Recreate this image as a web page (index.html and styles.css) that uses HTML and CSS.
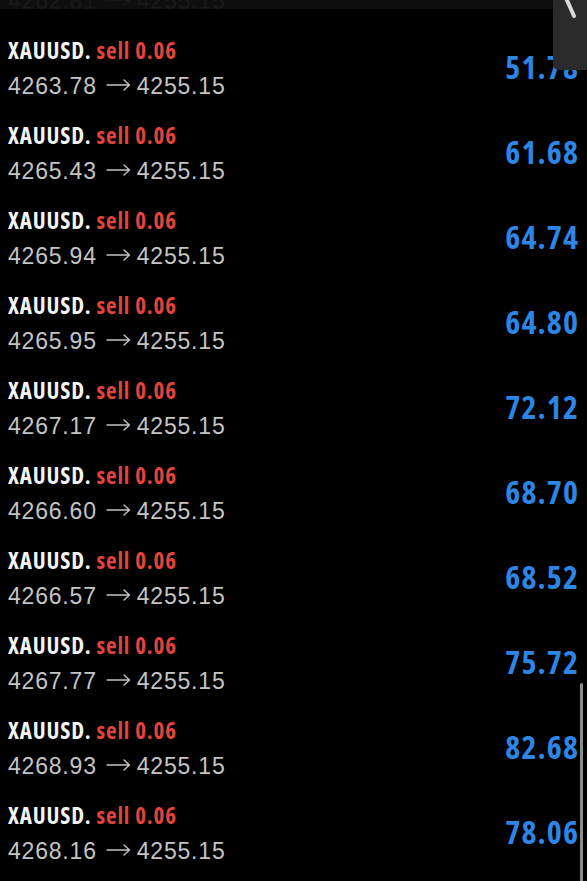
FILE: index.html
```html
<!DOCTYPE html>
<html>
<head>
<meta charset="utf-8">
<link rel="stylesheet" href="styles.css">
</head>
<body>
<div class="screen">
  <div class="partial">
    <div class="row">
      <div class="info">
        <div class="title"><span class="sym">XAUUSD.</span> <span class="side">sell 0.06</span></div>
        <div class="price">4262.81<svg class="arrow" width="25" height="12" viewBox="0 0 25 12"><path d="M1 6 H23.5 M18 1 L23.5 6 L18 11" stroke="currentColor" stroke-width="1.4" fill="none" stroke-linecap="round" stroke-linejoin="round"/></svg>4255.15</div>
      </div>
      <div class="pnl">45.96</div>
    </div>
  </div>
  <div class="topbar"></div>

  <div class="row">
    <div class="info">
      <div class="title"><span class="sym">XAUUSD.</span> <span class="side">sell 0.06</span></div>
      <div class="price">4263.78<svg class="arrow" width="25" height="12" viewBox="0 0 25 12"><path d="M1 6 H23.5 M18 1 L23.5 6 L18 11" stroke="currentColor" stroke-width="1.4" fill="none" stroke-linecap="round" stroke-linejoin="round"/></svg>4255.15</div>
    </div>
    <div class="pnl">51.78</div>
  </div>
  <div class="row">
    <div class="info">
      <div class="title"><span class="sym">XAUUSD.</span> <span class="side">sell 0.06</span></div>
      <div class="price">4265.43<svg class="arrow" width="25" height="12" viewBox="0 0 25 12"><path d="M1 6 H23.5 M18 1 L23.5 6 L18 11" stroke="currentColor" stroke-width="1.4" fill="none" stroke-linecap="round" stroke-linejoin="round"/></svg>4255.15</div>
    </div>
    <div class="pnl">61.68</div>
  </div>
  <div class="row">
    <div class="info">
      <div class="title"><span class="sym">XAUUSD.</span> <span class="side">sell 0.06</span></div>
      <div class="price">4265.94<svg class="arrow" width="25" height="12" viewBox="0 0 25 12"><path d="M1 6 H23.5 M18 1 L23.5 6 L18 11" stroke="currentColor" stroke-width="1.4" fill="none" stroke-linecap="round" stroke-linejoin="round"/></svg>4255.15</div>
    </div>
    <div class="pnl">64.74</div>
  </div>
  <div class="row">
    <div class="info">
      <div class="title"><span class="sym">XAUUSD.</span> <span class="side">sell 0.06</span></div>
      <div class="price">4265.95<svg class="arrow" width="25" height="12" viewBox="0 0 25 12"><path d="M1 6 H23.5 M18 1 L23.5 6 L18 11" stroke="currentColor" stroke-width="1.4" fill="none" stroke-linecap="round" stroke-linejoin="round"/></svg>4255.15</div>
    </div>
    <div class="pnl">64.80</div>
  </div>
  <div class="row">
    <div class="info">
      <div class="title"><span class="sym">XAUUSD.</span> <span class="side">sell 0.06</span></div>
      <div class="price">4267.17<svg class="arrow" width="25" height="12" viewBox="0 0 25 12"><path d="M1 6 H23.5 M18 1 L23.5 6 L18 11" stroke="currentColor" stroke-width="1.4" fill="none" stroke-linecap="round" stroke-linejoin="round"/></svg>4255.15</div>
    </div>
    <div class="pnl">72.12</div>
  </div>
  <div class="row">
    <div class="info">
      <div class="title"><span class="sym">XAUUSD.</span> <span class="side">sell 0.06</span></div>
      <div class="price">4266.60<svg class="arrow" width="25" height="12" viewBox="0 0 25 12"><path d="M1 6 H23.5 M18 1 L23.5 6 L18 11" stroke="currentColor" stroke-width="1.4" fill="none" stroke-linecap="round" stroke-linejoin="round"/></svg>4255.15</div>
    </div>
    <div class="pnl">68.70</div>
  </div>
  <div class="row">
    <div class="info">
      <div class="title"><span class="sym">XAUUSD.</span> <span class="side">sell 0.06</span></div>
      <div class="price">4266.57<svg class="arrow" width="25" height="12" viewBox="0 0 25 12"><path d="M1 6 H23.5 M18 1 L23.5 6 L18 11" stroke="currentColor" stroke-width="1.4" fill="none" stroke-linecap="round" stroke-linejoin="round"/></svg>4255.15</div>
    </div>
    <div class="pnl">68.52</div>
  </div>
  <div class="row">
    <div class="info">
      <div class="title"><span class="sym">XAUUSD.</span> <span class="side">sell 0.06</span></div>
      <div class="price">4267.77<svg class="arrow" width="25" height="12" viewBox="0 0 25 12"><path d="M1 6 H23.5 M18 1 L23.5 6 L18 11" stroke="currentColor" stroke-width="1.4" fill="none" stroke-linecap="round" stroke-linejoin="round"/></svg>4255.15</div>
    </div>
    <div class="pnl">75.72</div>
  </div>
  <div class="row">
    <div class="info">
      <div class="title"><span class="sym">XAUUSD.</span> <span class="side">sell 0.06</span></div>
      <div class="price">4268.93<svg class="arrow" width="25" height="12" viewBox="0 0 25 12"><path d="M1 6 H23.5 M18 1 L23.5 6 L18 11" stroke="currentColor" stroke-width="1.4" fill="none" stroke-linecap="round" stroke-linejoin="round"/></svg>4255.15</div>
    </div>
    <div class="pnl">82.68</div>
  </div>
  <div class="row">
    <div class="info">
      <div class="title"><span class="sym">XAUUSD.</span> <span class="side">sell 0.06</span></div>
      <div class="price">4268.16<svg class="arrow" width="25" height="12" viewBox="0 0 25 12"><path d="M1 6 H23.5 M18 1 L23.5 6 L18 11" stroke="currentColor" stroke-width="1.4" fill="none" stroke-linecap="round" stroke-linejoin="round"/></svg>4255.15</div>
    </div>
    <div class="pnl">78.06</div>
  </div>

  <div class="corner">
    <svg width="34" height="70" viewBox="0 0 34 70"><path d="M13 -2 L21 16" stroke="#d9d9d9" stroke-width="4" stroke-linecap="round" fill="none"/></svg>
  </div>
  <div class="scrollbar"></div>
</div>
</body>
</html>
```
FILE: styles.css
```css
html, body {
  margin: 0;
  padding: 0;
  background: #000;
}
.screen {
  position: relative;
  width: 587px;
  height: 881px;
  overflow: hidden;
  background: #000;
}
.partial {
  height: 24px;
  overflow: hidden;
  display: flex;
  flex-direction: column;
  justify-content: flex-end;
  opacity: 0.18;
}
.partial .row {
  flex-shrink: 0;
}
.topbar {
  position: absolute;
  left: 0;
  top: 0;
  width: 100%;
  height: 9px;
  background: rgba(22, 22, 22, 0.7);
}
.row {
  height: 85px;
  box-sizing: border-box;
  display: flex;
  align-items: center;
  justify-content: space-between;
  padding: 3px 9px 0 8px;
}
.info {
  display: flex;
  flex-direction: column;
}
.title {
  font-family: "Open Sans", "Liberation Sans", sans-serif;
  font-stretch: 75%;
  font-weight: 700;
  font-size: 23px;
  letter-spacing: 0.85px;
  line-height: 36px;
  white-space: nowrap;
}
.sym {
  color: #f4f4f4;
}
.side {
  color: #e2443d;
}
.price {
  font-family: "Liberation Sans", Arial, sans-serif;
  font-size: 23px;
  letter-spacing: 0.8px;
  line-height: 36px;
  color: #c4c4c4;
  white-space: nowrap;
  display: flex;
  align-items: center;
}
.arrow {
  margin: -2px 6px 0 9px;
  flex-shrink: 0;
}
.pnl {
  font-family: "Open Sans", "Liberation Sans", sans-serif;
  font-stretch: 75%;
  font-weight: 700;
  font-size: 32px;
  letter-spacing: 1.1px;
  margin-right: -1px;
  color: #2d85e5;
  margin-top: -4px;
}
.corner {
  position: absolute;
  right: 0;
  top: 0;
  width: 34px;
  height: 70px;
  background: #2a2a2a;
  border-bottom-left-radius: 6px;
}
.corner svg {
  display: block;
}
.scrollbar {
  position: absolute;
  left: 580px;
  top: 683px;
  width: 3px;
  height: 210px;
  border-radius: 2px;
  background: #8c8c8c;
}
```
